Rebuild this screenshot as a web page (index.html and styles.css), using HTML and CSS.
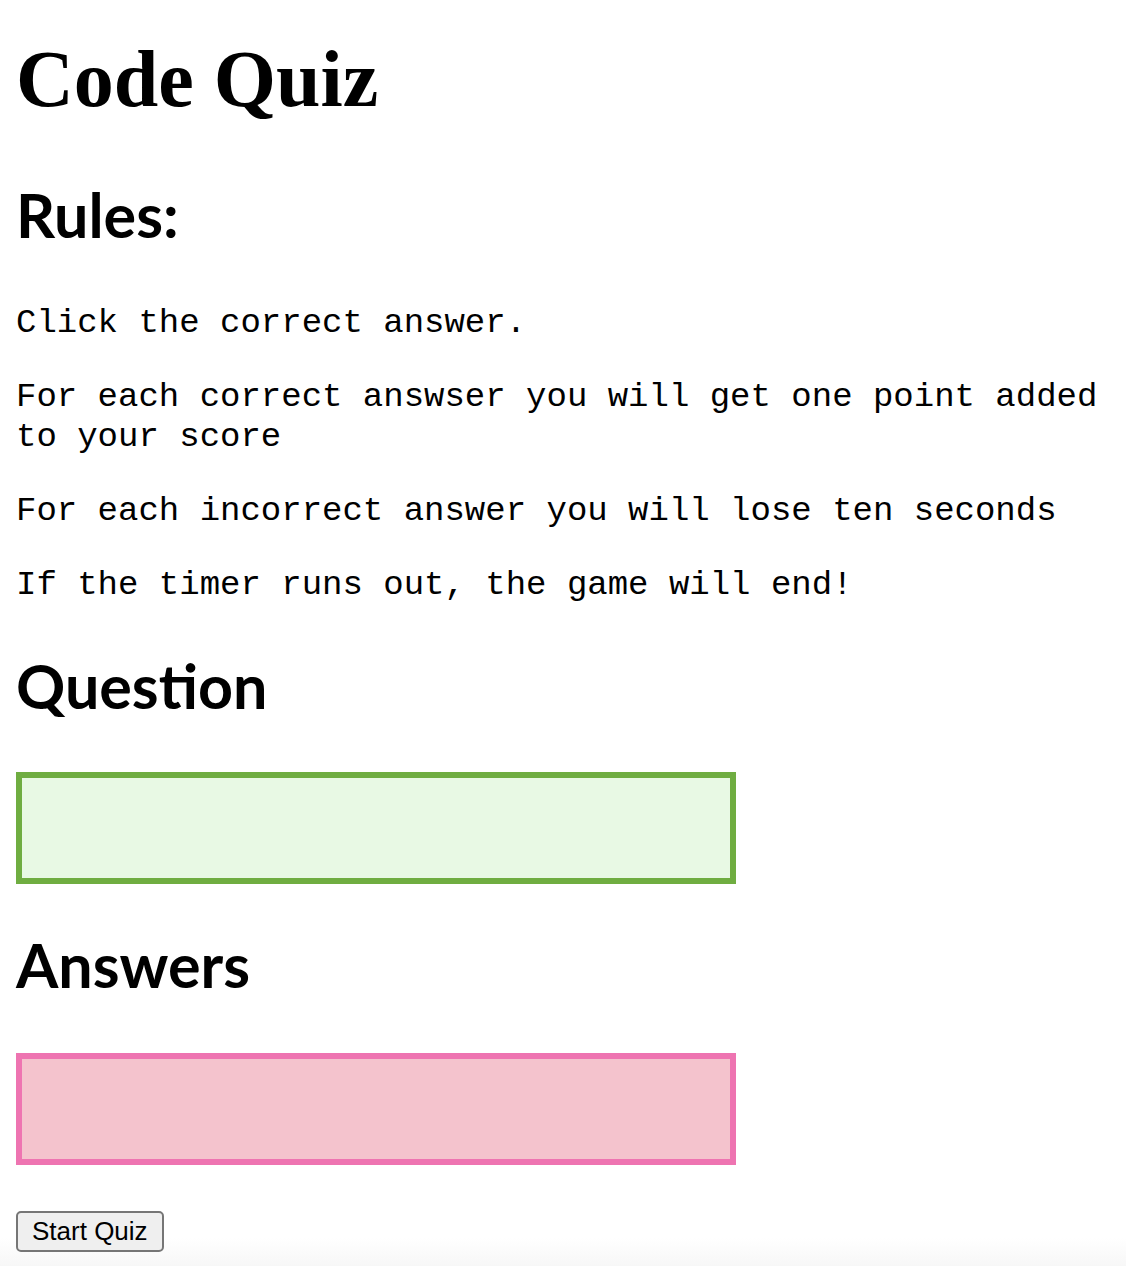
FILE: index.html
```html
<!DOCTYPE html>
<html lang="en">
<head>
<meta charset="utf-8">
<title>Code Quiz</title>
<link rel="stylesheet" href="styles.css">
</head>
<body>
<main class="page">
  <h1 class="title">Code Quiz</h1>
  <h2 class="heading heading-first">Rules:</h2>
  <div class="rules">
    <p class="rule">Click the correct answer.</p>
    <p class="rule">For each correct answser you will get one point added to your score</p>
    <p class="rule">For each incorrect answer you will lose ten seconds</p>
    <p class="rule">If the timer runs out, the game will end!</p>
  </div>
  <h2 class="heading">Question</h2>
  <div class="box box-question"></div>
  <h2 class="heading">Answers</h2>
  <div class="box box-answers"></div>
  <button class="start" type="button">Start Quiz</button>
</main>
</body>
</html>
```
FILE: styles.css
```css
html {
  height: 100%;
  background: linear-gradient(to bottom, #ffffff calc(100% - 28px), #f7f7f7 100%);
}

body {
  margin: 0;
  color: #000;
}

.page {
  padding: 33px 16px 0;
}

.title {
  margin: 0 0 54px;
  font-family: "Liberation Serif", "Times New Roman", serif;
  font-weight: 700;
  font-size: 80px;
  line-height: 92px;
}

.heading {
  margin: 45px 0 50px;
  font-family: Lato, "Open Sans", sans-serif;
  font-weight: 700;
  font-size: 61px;
  line-height: 72px;
}

.heading-first {
  margin-top: 54px;
}

.rules {
  padding-top: 2px;
}

.rule {
  margin: 0 0 34px;
  font-family: "Liberation Mono", "Courier New", monospace;
  font-size: 34px;
  line-height: 40px;
}

.rules .rule:last-child {
  margin-bottom: 0;
}

.box {
  width: 708px;
  height: 100px;
  border: 6px solid;
}

.box-question {
  background: #e8f9e4;
  border-color: #6fad41;
}

.box-answers {
  background: #f4c3cd;
  border-color: #ee74b1;
  margin-top: 52px;
  margin-bottom: 46px;
}

.start {
  display: block;
  margin: 0;
  padding: 3px 14px;
  font-family: "Liberation Sans", Arial, sans-serif;
  font-size: 26px;
  line-height: 31px;
  color: #000;
  background: #efefef;
  border: 2px solid #767676;
  border-radius: 5px;
}
```
